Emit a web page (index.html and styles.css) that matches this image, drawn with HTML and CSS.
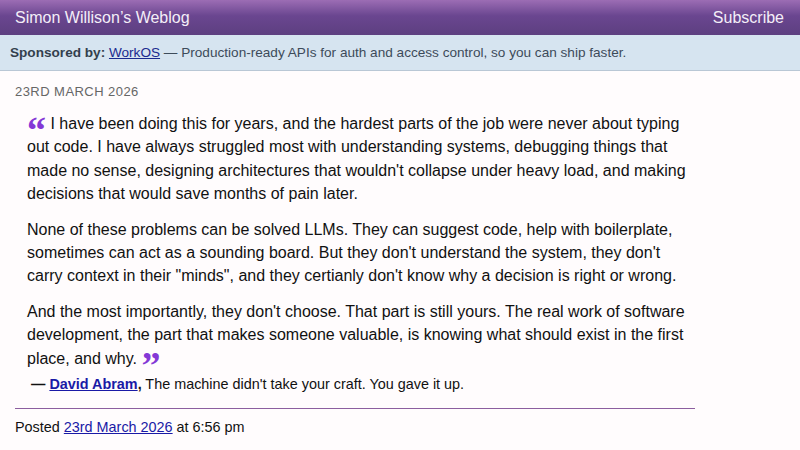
FILE: index.html
```html
<!DOCTYPE html>
<html>
<head>
<meta charset="utf-8">
<link rel="stylesheet" href="styles.css">
</head>
<body>
<header class="topbar">
  <a class="site-title" href="#">Simon Willison’s Weblog</a>
  <a class="subscribe" href="#">Subscribe</a>
</header>
<div class="sponsor"><strong>Sponsored by:</strong> <a href="#">WorkOS</a> — Production-ready APIs for auth and access control, so you can ship faster.</div>
<main class="content">
  <div class="date">23rd March 2026</div>
  <blockquote class="quote">
    <p><span class="qmark">“</span> I have been doing this for years, and the hardest parts of the job were never about typing out code. I have always struggled most with understanding systems, debugging things that made no sense, designing architectures that wouldn't collapse under heavy load, and making decisions that would save months of pain later.</p>
    <p>None of these problems can be solved LLMs. They can suggest code, help with boilerplate, sometimes can act as a sounding board. But they don't understand the system, they don't carry context in their "minds", and they certianly don't know why a decision is right or wrong.</p>
    <p>And the most importantly, they don't choose. That part is still yours. The real work of software development, the part that makes someone valuable, is knowing what should exist in the first place, and why. <span class="qmark">”</span></p>
  </blockquote>
  <p class="cite"><b>—</b> <a href="#">David Abram</a><b>,</b> The machine didn't take your craft. You gave it up.</p>
  <div class="posted">Posted <a href="#">23rd March 2026</a> at 6:56 pm</div>
</main>
</body>
</html>
```
FILE: styles.css
```css
html, body {
  margin: 0;
  padding: 0;
  background: #fffcfd;
  font-family: "Liberation Sans", Arial, sans-serif;
  color: #111;
}
.topbar {
  height: 35px;
  display: flex;
  align-items: center;
  justify-content: space-between;
  padding: 0 16px 0 15px;
  background: linear-gradient(to bottom, #9c6db4 0%, #6a4690 45%, #5d3f80 100%);
}
.topbar a {
  color: #f4eef8;
  text-decoration: none;
  font-size: 16px;
}
.sponsor {
  height: 36px;
  box-sizing: border-box;
  line-height: 35px;
  padding: 0 10px;
  background: #d6e4f0;
  border-bottom: 1px solid #b9c7d5;
  font-size: 13.6px;
  color: #3d4b5a;
  white-space: nowrap;
}
.sponsor strong {
  color: #333f4d;
}
.sponsor a {
  color: #1a2a8f;
  text-decoration: underline;
}
.content {
  width: 680px;
  padding: 0 15px;
}
.date {
  margin-top: 13px;
  font-size: 13px;
  letter-spacing: 0.45px;
  text-transform: uppercase;
  color: #666;
  line-height: 16px;
}
.quote {
  margin: 12px 0 0 12px;
  padding: 0;
}
.quote p {
  margin: 0 0 12px 0;
  font-size: 16px;
  line-height: 23.4px;
  color: #111;
}
.qmark {
  color: #8438d6;
  font-family: "Liberation Serif", "Times New Roman", serif;
  font-weight: bold;
  font-size: 38px;
  line-height: 0;
  vertical-align: -0.36em;
}
.cite {
  margin: -8px 0 0 16px;
  font-size: 14.4px;
  line-height: 21px;
  color: #111;
}
.cite a {
  color: #1a1aa6;
  font-weight: bold;
}
.posted {
  margin-top: 13px;
  border-top: 1px solid #8c5e9f;
  padding-top: 8px;
  font-size: 14.4px;
  line-height: 20px;
  color: #111;
}
.posted a {
  color: #1a1aa6;
}
```
